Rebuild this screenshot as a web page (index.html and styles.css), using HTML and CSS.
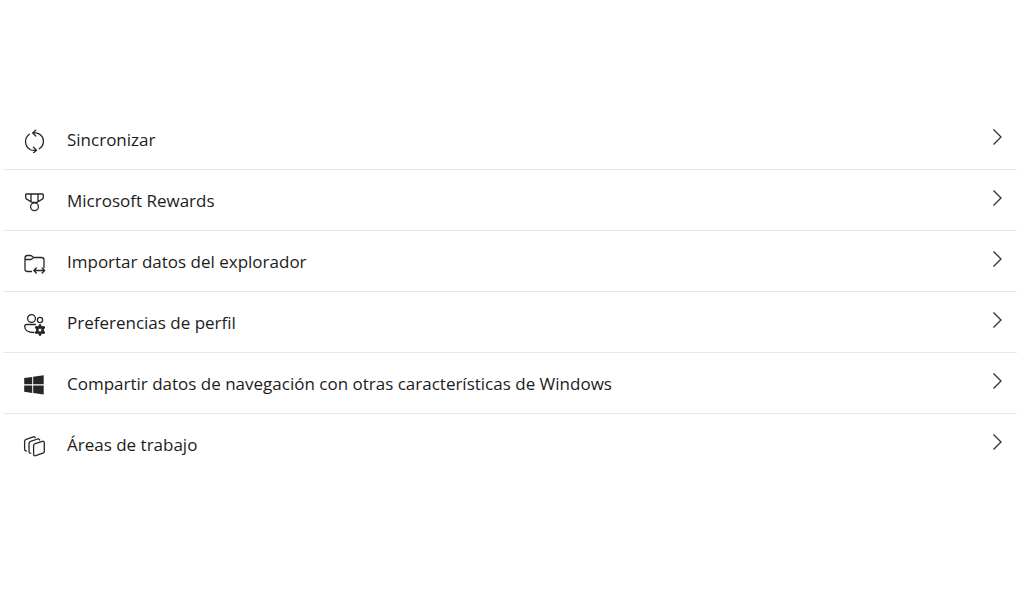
FILE: index.html
```html
<!DOCTYPE html>
<html lang="es">
<head>
<meta charset="utf-8">
<meta name="viewport" content="width=device-width, initial-scale=1">
<title>Perfil</title>
<link rel="stylesheet" href="styles.css">
</head>
<body>
<main class="settings">
  <ul class="list">
    <li class="item"><a class="row" href="#sincronizar">
      <svg class="icon" viewBox="0 0 24 24" aria-hidden="true"><path d="M7.300 5.200C2 9.200 2.300 17 8 20.500Q10.500 21.700 14 21.300M11.500 18.200l3 3-3 2.800M17.300 19.800C23 16 22.700 8 17 4.900Q14.500 3.500 11 4M13.700 1.300l-3 2.800 3 2.900"/></svg>
      <span class="label">Sincronizar</span>
      <svg class="chevron" viewBox="0 0 10 18" aria-hidden="true"><path d="M1.500 1.500L9 9l-7.500 7.500"/></svg>
    </a></li>
    <li class="item"><a class="row" href="#rewards">
      <svg class="icon" viewBox="0 0 24 24" aria-hidden="true"><path d="M4.500 4h16a.8.8 0 0 1 .8.800v2.400q0 1.200-1 1.900L14.800 12.500h-4.600L4.700 9.100q-1-.7-1-1.900V4.800A.8.8 0 0 1 4.500 4zM9 4v7.500M16 4v7.500"/><circle class="medal" cx="12.500" cy="16.800" r="3.900"/></svg>
      <span class="label">Microsoft Rewards</span>
      <svg class="chevron" viewBox="0 0 10 18" aria-hidden="true"><path d="M1.500 1.500L9 9l-7.500 7.500"/></svg>
    </a></li>
    <li class="item"><a class="row" href="#importar">
      <svg class="icon" viewBox="0 0 24 24" aria-hidden="true"><path d="M9.500 20.500H5.500q-2.500 0-2.500-2.500V7q0-2.500 2.500-2.500h3q.8 0 1.300.5l1.700 1.500h8q2.500 0 2.500 2.500v7.500M3 8.500h5.500q.8 0 1.300-.5l1.700-1.500M12 19.500h10.500M14.300 17l-2.500 2.500 2.500 2.500M20.200 17l2.500 2.500-2.500 2.500"/></svg>
      <span class="label">Importar datos del explorador</span>
      <svg class="chevron" viewBox="0 0 10 18" aria-hidden="true"><path d="M1.500 1.500L9 9l-7.500 7.500"/></svg>
    </a></li>
    <li class="item"><a class="row" href="#preferencias">
      <svg class="icon" viewBox="0 0 24 24" aria-hidden="true"><circle cx="9.500" cy="6.500" r="3.900"/><circle cx="18" cy="8" r="2.600"/><path d="M13.500 12.500h-9q-1.800 0-1.800 1.800C2.700 18.500 6 20.500 12 20.500"/><path class="gear" fill-rule="evenodd" d="M17 12.300h2l.6 2 2.600-.4 1 1.700-1.600 2.400 1.600 2.400-1 1.700-2.600-.4-.6 2h-2l-.6-2-2.600.4-1-1.700 1.600-2.400-1.600-2.400 1-1.700 2.600.4zM18 16.500a1.500 1.500 0 1 0 0 3 1.500 1.500 0 0 0 0-3z"/></svg>
      <span class="label">Preferencias de perfil</span>
      <svg class="chevron" viewBox="0 0 10 18" aria-hidden="true"><path d="M1.500 1.500L9 9l-7.500 7.500"/></svg>
    </a></li>
    <li class="item"><a class="row" href="#compartir">
      <svg class="icon solid" viewBox="0 0 24 24" aria-hidden="true"><path d="M2.200 5l8-1.100v7.400h-8zM11.200 3.700L21.700 2.300v9H11.200zM2.200 12.500h8v7.400l-8-1.100zM11.200 12.500h10.500v9L11.200 20.100z"/></svg>
      <span class="label">Compartir datos de navegación con otras características de Windows</span>
      <svg class="chevron" viewBox="0 0 10 18" aria-hidden="true"><path d="M1.500 1.500L9 9l-7.500 7.500"/></svg>
    </a></li>
    <li class="item"><a class="row" href="#areas">
      <svg class="icon" viewBox="0 0 24 24" aria-hidden="true"><path d="M13.200 9.600L20.400 7.300q1.900-.5 1.900 1.400v8.500q0 1.500-1.400 2L13.500 21.700q-1.900.5-1.900-1.400v-8.500q0-1.600 1.600-2.200zM8.800 19.300Q7 19.300 7 17.500V9.600q0-1.600 1.600-2.200L15.700 5q1.600-.4 2 1M4.300 17Q2.600 16.800 2.600 15.200V7.500q0-1.600 1.600-2.200L11.300 2.900q1.500-.4 2 .8"/></svg>
      <span class="label">Áreas de trabajo</span>
      <svg class="chevron" viewBox="0 0 10 18" aria-hidden="true"><path d="M1.500 1.500L9 9l-7.500 7.500"/></svg>
    </a></li>
  </ul>
</main>
</body>
</html>
```
FILE: styles.css
```css
body {
  margin: 0;
  background: #fff;
  color: #1c1c1c;
  font-family: "Segoe UI", "Open Sans", sans-serif;
  font-size: 17px;
  font-weight: 500;
  line-height: 24px;
}

.settings {
  padding: 109px 3px;
}

.list {
  margin: 0;
  padding: 0;
  list-style: none;
}

.item + .item {
  border-top: 1px solid #e8e8e8;
}

.row {
  display: flex;
  align-items: center;
  min-height: 60px;
  padding: 0 15px 0 19px;
  color: inherit;
  text-decoration: none;
}

.icon {
  flex: none;
  width: 24px;
  height: 24px;
  margin: 4px 21px 0 0;
  fill: none;
  stroke: #262626;
  stroke-width: 1.3;
  stroke-linecap: round;
  stroke-linejoin: round;
}

.medal {
  fill: #fff;
}

.gear,
.solid {
  fill: #262626;
  stroke: none;
}

.label {
  flex: 1;
  padding-top: 2px;
}

.chevron {
  flex: none;
  width: 10px;
  height: 18px;
  margin-bottom: 4px;
  fill: none;
  stroke: #303030;
  stroke-width: 1.3;
}
```
